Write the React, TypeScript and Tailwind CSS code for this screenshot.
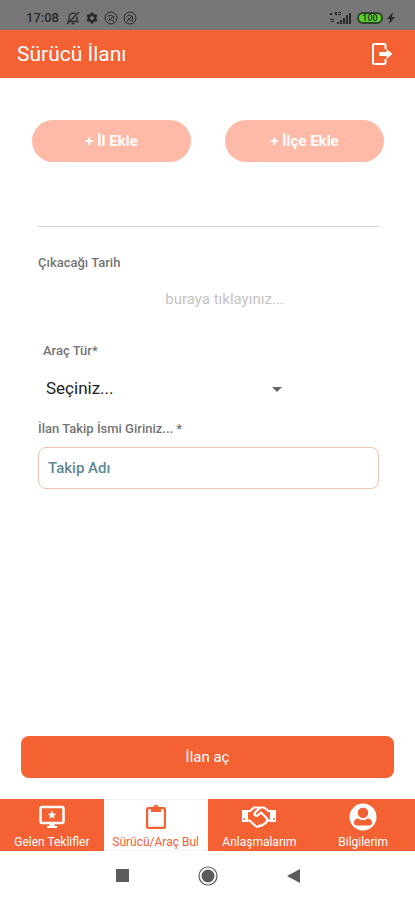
import type { ReactNode } from "react";
import { MdSettings } from "react-icons/md";

function ExitIcon() {
  return (
    <svg viewBox="0 0 22 24" className="w-[22px] h-6" fill="none" aria-hidden="true">
      <path
        d="M14.500 7V3.500a1.500 1.500 0 0 0-1.500-1.500H3.500A1.500 1.500 0 0 0 2 3.500v17A1.500 1.500 0 0 0 3.500 22H13a1.500 1.500 0 0 0 1.500-1.500V17"
        stroke="currentColor"
        strokeWidth="2"
      />
      <path d="M8 10h7.500V7L21.500 12l-6 5v-3H8z" fill="currentColor" />
    </svg>
  );
}

function MonitorIcon() {
  return (
    <svg viewBox="0 0 26 24" className="w-[26px] h-6" fill="none" aria-hidden="true">
      <rect x="1.500" y="2" width="23" height="16" rx="1.500" stroke="currentColor" strokeWidth="2.500" />
      <path d="M10.500 18h5v3H18v2H8v-2h2.500z" fill="currentColor" />
      <path d="m13 5.500 1.200 3 3.100.2-2.400 2 .8 3.100-2.700-1.700-2.700 1.700.8-3.100-2.400-2 3.100-.2z" fill="currentColor" />
    </svg>
  );
}

function ClipboardIcon() {
  return (
    <svg viewBox="0 0 20 26" className="w-5 h-[26px]" fill="none" aria-hidden="true">
      <rect x="1.100" y="4.100" width="17.800" height="19.800" rx="1" stroke="currentColor" strokeWidth="2.200" />
      <path
        fillRule="evenodd"
        d="M5 3h2.200a2.900 2.900 0 0 1 5.600 0H15v5H5zM10 2.500a1.100 1.100 0 1 0 0 2.200 1.100 1.100 0 0 0 0-2.200z"
        fill="currentColor"
      />
    </svg>
  );
}

function HandshakeIcon() {
  return (
    <svg viewBox="0 0 34 24" className="w-[34px] h-6" fill="none" aria-hidden="true">
      <path
        fillRule="evenodd"
        d="M0 5h6v12H0zM2.200 13a1 1 0 1 0 0 2 1 1 0 0 0 0-2zM28 5h6v12h-6zM31.800 13a1 1 0 1 0 0 2 1 1 0 0 0 0-2z"
        fill="currentColor"
      />
      <g stroke="currentColor" strokeWidth="2.200" strokeLinejoin="round" strokeLinecap="round">
        <path d="M6 6h2l4-3.500h3.500L17 3.300 18.500 2.500H22L26.500 6H28M6 15.500h1.500l6 5.500c1.200 1 2.500 1 3.500 0l1-.5c1.500.5 2.700 0 3.500-1.500 1.500 0 2.500-1 3-2.500l1.500-1H28" />
        <path d="M17.500 3.200 13 7.500c-1.500 1.800.8 4.500 3 2.700l3-2.700 5.500 5.500c1 1 .8 2.500 0 3.500" />
      </g>
    </svg>
  );
}

function ProfileIcon() {
  return (
    <svg viewBox="0 0 28 28" className="w-7 h-7" aria-hidden="true">
      <circle cx="14" cy="14" r="13.500" fill="currentColor" />
      <path
        d="M9 15.200C6.500 15.800 5 17.500 5 19.500 5 21.300 6.300 22.500 8 22.500h12c1.700 0 3-1.200 3-3 0-2-1.500-3.700-4-4.300a7.500 7.500 0 0 1-10 0z"
        className="fill-[#f46133]"
      />
      <circle cx="14" cy="9.800" r="5.500" className="fill-[#f46133]" />
      <circle cx="14" cy="9.800" r="6" fill="none" stroke="currentColor" strokeWidth="1.200" />
    </svg>
  );
}

function MutedBellIcon() {
  return (
    <svg viewBox="0 0 14 14" className="w-3.5 h-3.5" fill="none" stroke="currentColor" strokeWidth="1.300" aria-hidden="true">
      <path d="M3 9.500V6a4 4 0 0 1 6.500-3M11 5.500v5H4.500M1.500 10.500H3M12.500 10.500H11M5.500 12.500h3M1 13 13 1" />
    </svg>
  );
}

function CircleArrowIcon() {
  return (
    <svg viewBox="0 0 14 14" className="w-3.5 h-3.5" fill="none" stroke="currentColor" aria-hidden="true">
      <circle cx="7" cy="7" r="6" />
      <path d="M3.500 5.500 6 4l3.500 1.500v3M9 5.500l-5 4.500M5 7.500l2 1.500M7.500 9.500l2.500.5" />
    </svg>
  );
}

function SignalIcon() {
  return (
    <svg viewBox="0 0 24 14" className="w-6 h-3.5" fill="currentColor" aria-hidden="true">
      <path d="M8 11h2v2H8zM11 9h2v4h-2zM14 7h2v6h-2zM17 4h2v9h-2zM20 2h2v11h-2zM1 2h2v2H1zM6 1h2v3H6zM9 1h3v1H9zM9 3h3v1H9zM1 8h4v1H1zM2 10h3v1H2z" />
    </svg>
  );
}

function StatusBar() {
  return (
    <div className="h-[30px] pt-2 pl-[26px] pr-5 flex justify-between bg-[#777777] text-[#292929]">
      <div className="h-5 flex items-center gap-[5px]">
        <span className="w-[35px] text-[13px] font-medium">17:08</span>
        <MutedBellIcon />
        <MdSettings size={14} />
        <CircleArrowIcon />
        <CircleArrowIcon />
      </div>
      <div className="h-5 flex items-center gap-1">
        <SignalIcon />
        <span className="w-[26px] h-3 flex items-center justify-center rounded-full border-2 border-[#30422a] bg-[#5bd326] text-[9px] leading-none font-medium">
          100
        </span>
        <svg viewBox="0 0 8 12" className="w-2 h-3" fill="currentColor" aria-hidden="true">
          <path d="M6 0 0 7h3L2 12l6-7H5z" />
        </svg>
      </div>
    </div>
  );
}

function TabItem({ label, icon, active }: { label: string; icon: ReactNode; active?: boolean }) {
  return (
    <a
      href="#"
      aria-current={active ? "page" : undefined}
      className={
        active
          ? "flex flex-col items-center bg-white text-[#f46133] border-y border-gray-100"
          : "flex flex-col items-center bg-[#f46133] text-white border-y border-[#f46133]"
      }
    >
      <span className="h-[34px] flex items-center justify-center">{icon}</span>
      <span className="text-xs leading-4 whitespace-nowrap">{label}</span>
    </a>
  );
}

export default function App() {
  return (
    <div className="min-h-screen flex flex-col bg-white font-['Roboto',sans-serif]">
      <StatusBar />

      {/* App bar */}
      <header className="h-12 pl-[17px] pr-[22px] flex items-center justify-between bg-[#f46133] text-white">
        <h1 className="text-[21px] leading-6">Sürücü İlanı</h1>
        <button type="button" aria-label="Çıkış">
          <ExitIcon />
        </button>
      </header>

      {/* Form */}
      <main className="flex-1 flex flex-col pt-[42px]">
        <div className="pl-8 pr-[31px] grid grid-cols-2 gap-[34px]">
          <button type="button" className="h-[42px] rounded-full bg-[#ffbaa7] text-white text-[15px] font-bold">
            + İl Ekle
          </button>
          <button type="button" className="h-[42px] rounded-full bg-[#ffbaa7] text-white text-[15px] font-bold">
            + İlçe Ekle
          </button>
        </div>

        <div className="pl-[38px] pr-9 flex flex-col">
          <hr className="mt-16 border-[#d2d2d2]" />

          <label htmlFor="date" className="mt-7 text-[13px] leading-4 font-medium text-[#747474]">
            Çıkacağı Tarih
          </label>
          <input
            id="date"
            type="text"
            placeholder="buraya tıklayınız..."
            className="mt-4 h-6 pl-8 w-full text-[15px] text-center outline-none placeholder:text-[#c4c4c4]"
          />

          <label htmlFor="vehicle" className="mt-8 pl-[5px] text-[13px] leading-4 font-medium text-[#747474]">
            Araç Tür*
          </label>
          <div className="mt-3.5 w-[248px] grid items-center">
            <select
              id="vehicle"
              className="col-start-1 row-start-1 h-8 w-full pl-2 appearance-none bg-transparent text-[17px] text-[#222222]"
            >
              <option>Seçiniz...</option>
            </select>
            <svg
              viewBox="0 0 10 5"
              className="col-start-1 row-start-1 justify-self-end mr-1 w-2.5 h-[5px] text-[#666666] pointer-events-none"
              fill="currentColor"
              aria-hidden="true"
            >
              <path d="M0 0h10L5 5z" />
            </svg>
          </div>

          <label htmlFor="tracking" className="mt-4 text-[13px] leading-4 font-medium text-[#747474]">
            İlan Takip İsmi Giriniz... *
          </label>
          <input
            id="tracking"
            type="text"
            placeholder="Takip Adı"
            className="mt-2.5 h-[42px] w-full px-[9px] rounded-lg border border-[#f3c3af] text-[15px] font-medium outline-none placeholder:text-[#5e8797]"
          />
        </div>

        <div className="mt-auto px-[21px] pb-[21px]">
          <button type="button" className="h-[42px] w-full rounded-lg bg-[#f46133] text-white text-[15px]">
            İlan aç
          </button>
        </div>
      </main>

      <nav className="h-[52px] grid grid-cols-4">
        <TabItem label="Gelen Teklifler" icon={<MonitorIcon />} />
        <TabItem label="Sürücü/Araç Bul" icon={<ClipboardIcon />} active />
        <TabItem label="Anlaşmalarım" icon={<HandshakeIcon />} />
        <TabItem label="Bilgilerim" icon={<ProfileIcon />} />
      </nav>

      {/* Android navigation */}
      <div className="h-[49px] flex items-center justify-center gap-[69px] text-[#5b5b5b]">
        <button type="button" aria-label="Son uygulamalar" className="w-[13px] h-[13px] bg-[#5b5b5b]" />
        <button type="button" aria-label="Ana ekran">
          <svg viewBox="0 0 20 20" className="w-5 h-5" aria-hidden="true">
            <circle cx="10" cy="10" r="9" fill="none" stroke="currentColor" strokeWidth="1.200" />
            <circle cx="10" cy="10" r="6.500" fill="currentColor" />
          </svg>
        </button>
        <button type="button" aria-label="Geri">
          <svg viewBox="0 0 13 14" className="w-[13px] h-3.5" fill="currentColor" aria-hidden="true">
            <path d="M13 0v14L0 7z" />
          </svg>
        </button>
      </div>
    </div>
  );
}
